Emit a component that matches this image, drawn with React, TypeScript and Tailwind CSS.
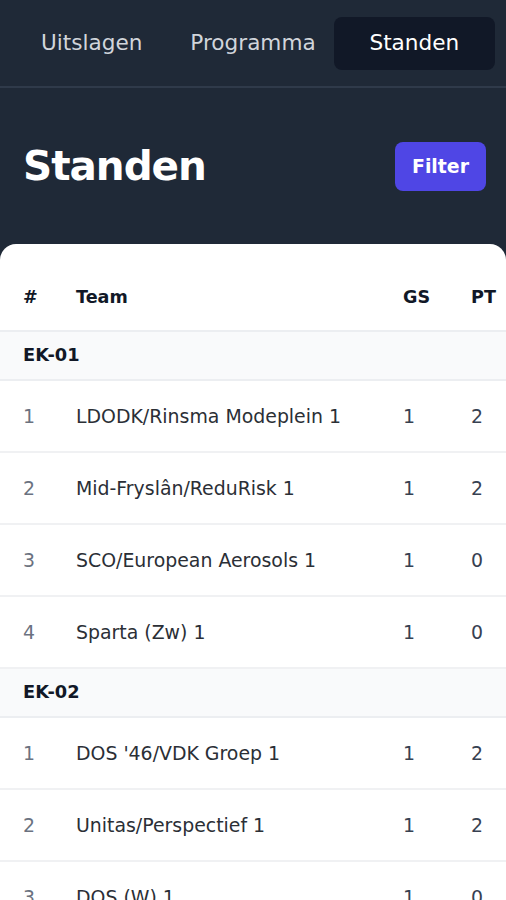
const groups = [
  {
    name: "EK-01",
    rows: [
      { pos: 1, team: "LDODK/Rinsma Modeplein 1", gs: 1, pt: 2 },
      { pos: 2, team: "Mid-Fryslân/ReduRisk 1", gs: 1, pt: 2 },
      { pos: 3, team: "SCO/European Aerosols 1", gs: 1, pt: 0 },
      { pos: 4, team: "Sparta (Zw) 1", gs: 1, pt: 0 },
    ],
  },
  {
    name: "EK-02",
    rows: [
      { pos: 1, team: "DOS '46/VDK Groep 1", gs: 1, pt: 2 },
      { pos: 2, team: "Unitas/Perspectief 1", gs: 1, pt: 2 },
      { pos: 3, team: "DOS (W) 1", gs: 1, pt: 0 },
    ],
  },
];

const tabs = ["Uitslagen", "Programma", "Standen"];

export default function App() {
  const active = "Standen";

  return (
    <div className="h-[900px] overflow-hidden bg-[#1f2937] font-['DejaVu_Sans',sans-serif]">
      {/* Tabs */}
      <nav className="grid grid-cols-3 px-[11px] pt-[17px] pb-[16px] border-b-2 border-[#2f3a4a]">
        {tabs.map((t) => (
          <button
            key={t}
            className={`h-[53px] rounded-lg text-[21.6px] ${
              t === active ? "bg-[#111827] text-white" : "text-[#d1d5db]"
            }`}
          >
            {t}
          </button>
        ))}
      </nav>

      {/* Title */}
      <div className="flex items-center justify-between h-[156px] pl-[23px] pr-[20px]">
        <h1 className="text-[40.5px] font-bold tracking-tight text-white">Standen</h1>
        <button className="h-[49px] px-[17px] rounded-lg bg-[#4f46e5] text-[18.9px] font-bold text-white">
          Filter
        </button>
      </div>

      {/* Table card */}
      <div className="bg-white rounded-t-2xl pt-[21px]">
        <div className="flex items-center h-[67px] pl-[23px] text-[17.6px] font-bold text-[#111827] border-b-2 border-[#eceef1]">
          <div className="w-[53px]">#</div>
          <div className="w-[327px]">Team</div>
          <div className="w-[68px]">GS</div>
          <div className="w-[35px] whitespace-nowrap">PT</div>
        </div>

        {groups.map((g) => (
          <div key={g.name}>
            <div className="flex items-center h-[49px] pl-[23px] bg-[#f9fafb] border-b-2 border-[#eceef1] text-[17.8px] font-bold text-[#111827]">
              {g.name}
            </div>
            {g.rows.map((r) => (
              <div
                key={r.pos}
                className="flex items-center h-[72px] pl-[23px] border-b-2 border-[#f0f1f3] text-[18.9px]"
              >
                <div className="w-[53px] text-[#6b7280]">{r.pos}</div>
                <div className="w-[327px] text-[#2b2f36]">{r.team}</div>
                <div className="w-[68px] text-[#374151]">{r.gs}</div>
                <div className="w-[35px] text-[#374151]">{r.pt}</div>
              </div>
            ))}
          </div>
        ))}
      </div>
    </div>
  );
}
